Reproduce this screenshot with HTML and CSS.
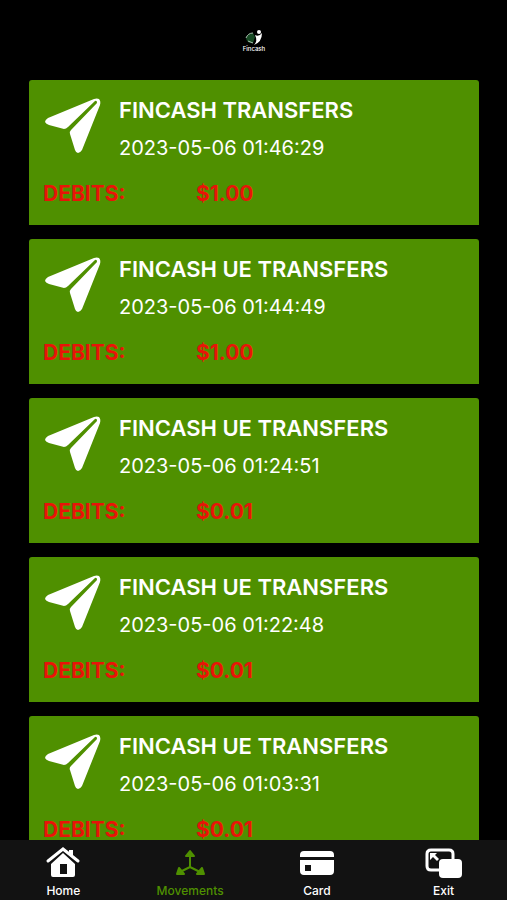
FILE: index.html
```html
<!DOCTYPE html>
<html lang="en">
<head>
  <meta charset="UTF-8">
  <meta name="viewport" content="width=device-width, initial-scale=1">
  <title>Fincash - Movements</title>
  <link rel="stylesheet" href="styles.css">
</head>
<body>
<svg class="defs" aria-hidden="true">
  <symbol id="plane" viewBox="0 0 56 56">
    <path d="M54 1Q52 0 49 1L3 20Q0 22 0 24Q1 26 4 27L19 31Q21 31 23 29L50 3Q52 2 52 5L26 32Q24 34 25 36L30 52Q31 55 33 55Q35 55 37 52L55 7Q56 3 54 1Z"/>
  </symbol>
</svg>

<header class="header">
  <svg class="logo" viewBox="0 0 22 24" role="img" aria-label="Fincash">
    <circle class="logo-head" cx="16" cy="3" r="2"/>
    <path class="logo-coin" d="M3 9Q5 4 10 4L12 8L10 14Q4 15 3 9Z"/>
    <path class="logo-line" d="M3 9Q5 4 10 4M5 12L10 14"/>
    <path class="logo-body" d="M11 16Q15 12 12 6Q16 8 19 4Q19 13 11 16Z"/>
    <text class="logo-text" x="11" y="22" text-anchor="middle">Fincash</text>
  </svg>
</header>

<main class="main">
  <article class="card">
    <div class="card-top">
      <svg class="plane"><use href="#plane"/></svg>
      <div>
        <h2>FINCASH TRANSFERS</h2>
        <p>2023-05-06 01:46:29</p>
      </div>
    </div>
    <div class="card-amount"><span>DEBITS:</span><span>$1.00</span></div>
  </article>
  <article class="card">
    <div class="card-top">
      <svg class="plane"><use href="#plane"/></svg>
      <div>
        <h2>FINCASH UE TRANSFERS</h2>
        <p>2023-05-06 01:44:49</p>
      </div>
    </div>
    <div class="card-amount"><span>DEBITS:</span><span>$1.00</span></div>
  </article>
  <article class="card">
    <div class="card-top">
      <svg class="plane"><use href="#plane"/></svg>
      <div>
        <h2>FINCASH UE TRANSFERS</h2>
        <p>2023-05-06 01:24:51</p>
      </div>
    </div>
    <div class="card-amount"><span>DEBITS:</span><span>$0.01</span></div>
  </article>
  <article class="card">
    <div class="card-top">
      <svg class="plane"><use href="#plane"/></svg>
      <div>
        <h2>FINCASH UE TRANSFERS</h2>
        <p>2023-05-06 01:22:48</p>
      </div>
    </div>
    <div class="card-amount"><span>DEBITS:</span><span>$0.01</span></div>
  </article>
  <article class="card">
    <div class="card-top">
      <svg class="plane"><use href="#plane"/></svg>
      <div>
        <h2>FINCASH UE TRANSFERS</h2>
        <p>2023-05-06 01:03:31</p>
      </div>
    </div>
    <div class="card-amount"><span>DEBITS:</span><span>$0.01</span></div>
  </article>
</main>

<nav class="tabs">
  <a class="tab" href="#home">
    <svg viewBox="0 0 40 32">
      <path class="fill" d="M26 3H30V12L26 8ZM20 6L32 17V28Q32 30 30 30H10Q8 30 8 28V17ZM17 17V27H24V17Z" fill-rule="evenodd"/>
      <path class="gap" d="M5 17L20 4L35 17"/>
      <path class="roof" d="M5 14L20 2L35 14"/>
    </svg>
    <span>Home</span>
  </a>
  <a class="tab active" href="#movements" aria-current="page">
    <svg viewBox="0 0 40 32">
      <path class="line" d="M20 9V20M20 20L10 25M20 20L30 25"/>
      <path class="arrow" d="M20 4L24 9H16ZM7 27L9 21L14 27ZM34 27L32 21L27 27Z"/>
    </svg>
    <span>Movements</span>
  </a>
  <a class="tab" href="#card">
    <svg viewBox="0 0 40 32">
      <path class="fill" d="M3 10V8Q3 4 7 4H33Q37 4 37 8V10ZM3 13H37V24Q37 28 33 28H7Q3 28 3 24ZM8 18V24H14V18Z" fill-rule="evenodd"/>
    </svg>
    <span>Card</span>
  </a>
  <a class="tab" href="#exit">
    <svg viewBox="0 0 40 32">
      <path class="frame" d="M16 23H7Q3 23 3 19V7Q3 3 7 3H25Q29 3 29 7V13"/>
      <path class="fill" d="M6 6H13L11 8L15 12L13 14L9 10L6 13Z"/>
      <rect class="fill" x="15" y="12" width="23" height="19" rx="4"/>
    </svg>
    <span>Exit</span>
  </a>
</nav>
</body>
</html>
```

FILE: styles.css
```css
* {
  box-sizing: border-box;
}

body {
  display: flex;
  flex-direction: column;
  height: 100vh;
  margin: 0;
  background-color: #000;
  color: #fff;
  font-family: Inter, "Liberation Sans", sans-serif;
}

.defs {
  display: none;
}

.header {
  display: flex;
  flex: none;
  justify-content: center;
  height: 80px;
  padding-top: 29px;
}

.logo {
  width: 22px;
  height: 24px;
  overflow: visible;
}
.logo-head, .logo-body {
  fill: #fff;
}
.logo-coin {
  fill: #174a24;
}
.logo-line {
  fill: none;
  stroke: #a9bbae;
}
.logo-text {
  fill: #fff;
  font-size: 6px;
  font-weight: 500;
}

.main {
  flex: 1;
  min-height: 0;
  padding: 0 28px 0 29px;
  overflow: hidden;
}

.card {
  margin-bottom: 14px;
  padding: 16px 14px;
  border-radius: 3px 3px 0 0;
  background-color: #4f9000;
}

.card-top {
  display: flex;
  gap: 18px;
}

.plane {
  width: 56px;
  height: 56px;
  margin: 2px 0 0 2px;
  fill: #fff;
}

h2 {
  margin: 0;
  font-size: 22px;
  font-weight: 600;
  line-height: 28px;
}

p {
  margin: 10px 0 0;
  font-size: 20px;
  line-height: 28px;
}

.card-amount {
  display: grid;
  grid-template-columns: 153px 1fr;
  margin-top: 17px;
  color: #e81408;
  font-size: 21px;
  font-weight: 700;
  line-height: 30px;
}

.tabs {
  display: flex;
  flex: none;
  height: 60px;
  padding-top: 7px;
  background-color: #121212;
}

.tab {
  display: flex;
  flex: 1;
  flex-direction: column;
  align-items: center;
  color: #fff;
  font-size: 12px;
  font-weight: 500;
  line-height: 16px;
  text-decoration: none;
}
.tab svg {
  width: 40px;
  height: 32px;
  margin-bottom: 4px;
}
.active {
  color: #4f9000;
}

.fill {
  fill: currentColor;
}
.line, .roof, .frame, .gap {
  fill: none;
  stroke: currentColor;
  stroke-width: 2;
}
.arrow {
  fill: currentColor;
  stroke: currentColor;
  stroke-width: 2;
  stroke-linejoin: round;
}
.roof {
  stroke-width: 3;
  stroke-linecap: round;
}
.gap {
  stroke: #121212;
}
.frame {
  stroke-width: 3;
}
```
